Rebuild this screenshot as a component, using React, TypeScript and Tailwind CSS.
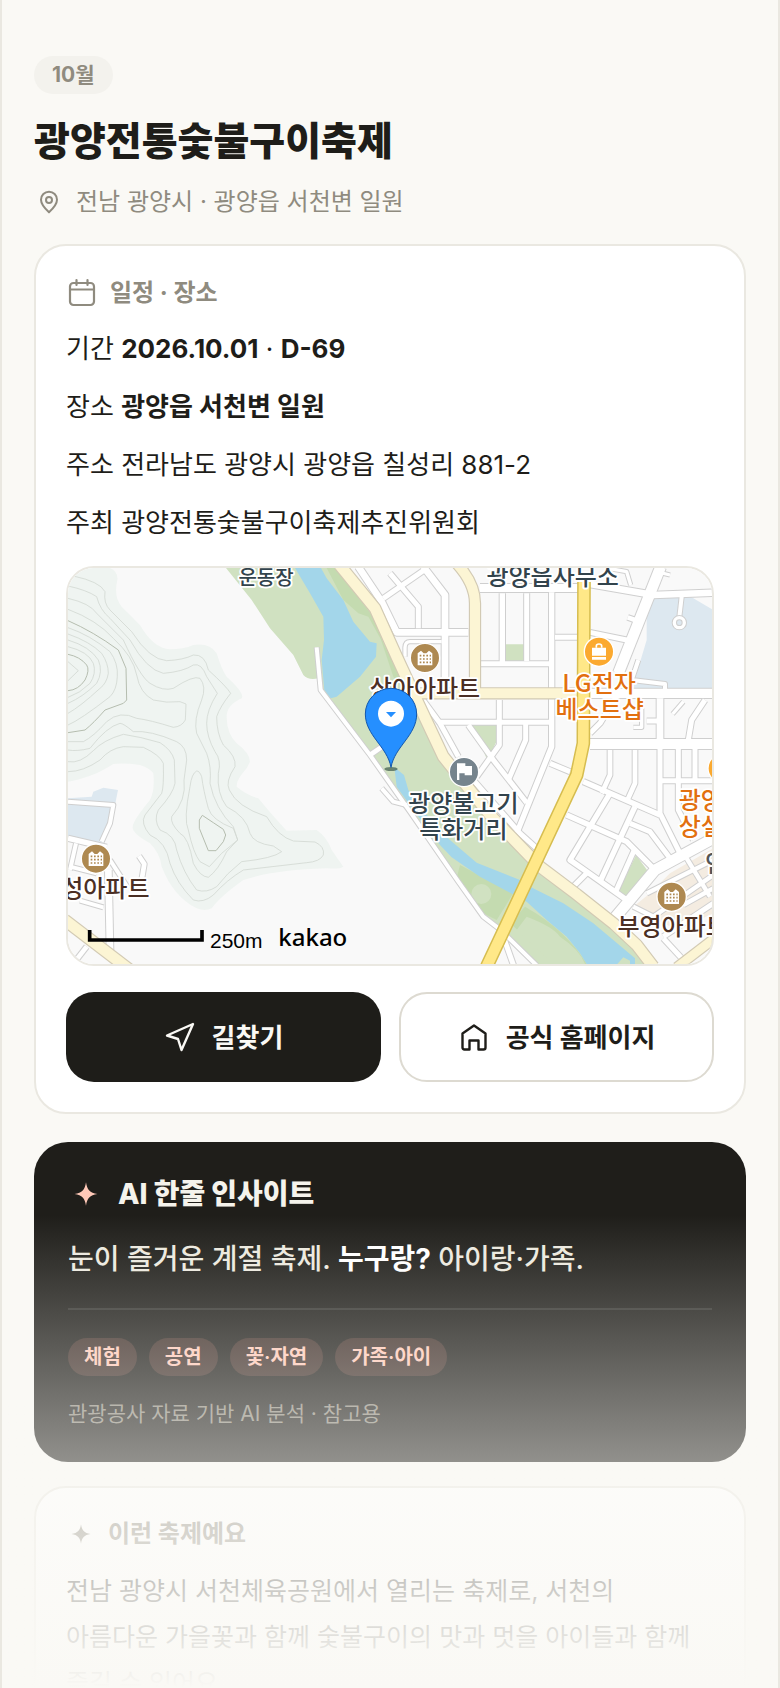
import React from 'react';

interface Road {
  d: string;
  w: number;
}

const ROADS: Road[] = [
  { d: 'M895 20L965 125L1010 217H1225', w: 20 },
  { d: 'M1090 20L1155 105V360', w: 20 },
  { d: 'M970 115L1100 25', w: 15 },
  { d: 'M990 40L1075 140V205', w: 15 },
  { d: 'M1035 290V262Q1036 245 1050 245H1145', w: 10 },
  { d: 'M1260 84H1555', w: 24 },
  { d: 'M1590 72L1780 105L1960 98', w: 20 },
  { d: 'M1640 24L1700 35L1712 75', w: 10 },
  { d: 'M1790 35L1830 45', w: 10 },
  { d: 'M1327 100V310', w: 16 },
  { d: 'M1400 100V303', w: 15 },
  { d: 'M1475 97V560L1370 820', w: 16 },
  { d: 'M1260 311H1468', w: 15 },
  { d: 'M1485 232H1560', w: 15 },
  { d: 'M1590 217L1700 240', w: 15 },
  { d: 'M1703 172L1725 180', w: 14 },
  { d: 'M1140 487H1475', w: 15 },
  { d: 'M1318 420V555L1250 650', w: 15 },
  { d: 'M1225 495L1300 600L1400 728', w: 15 },
  { d: 'M1397 490V540L1345 660', w: 15 },
  { d: 'M1085 415L1140 490L1195 590', w: 15 },
  { d: 'M1240 660L1380 820L1430 865', w: 15 },
  { d: 'M1802 20L1675 340', w: 32 },
  { d: 'M1735 300L1715 360L1815 372V392', w: 12 },
  { d: 'M1675 400L1620 490L1590 520', w: 15 },
  { d: 'M1590 400H1960', w: 28 },
  { d: 'M1590 552H1960', w: 30 },
  { d: 'M1865 110L1857 180', w: 12 },
  { d: 'M1800 415V540', w: 20 },
  { d: 'M1720 502H1745V425', w: 10 },
  { d: 'M1760 483H1795', w: 15 },
  { d: 'M1870 425L1838 462', w: 10 },
  { d: 'M1935 420L1895 480L1885 540', w: 15 },
  { d: 'M1650 570V645L1625 700', w: 14 },
  { d: 'M1725 570V670L1700 725', w: 14 },
  { d: 'M1800 565V760L1860 880', w: 15 },
  { d: 'M1855 565V750L1900 840', w: 15 },
  { d: 'M1905 565V660', w: 15 },
  { d: 'M1800 662H1960', w: 15 },
  { d: 'M1570 665L1800 765', w: 16 },
  { d: 'M1520 765L1700 845L1780 925', w: 16 },
  { d: 'M1470 610L1530 635', w: 15 },
  { d: 'M1650 700L1530 900L1580 935L1700 1020', w: 16 },
  { d: 'M1725 740L1620 965', w: 16 },
  { d: 'M1580 940L1535 985', w: 15 },
  { d: 'M1725 865L1665 1000', w: 15 },
  { d: 'M1710 790L1770 815L1830 895', w: 15 },
  { d: 'M1720 1040L1780 1070L1960 945', w: 13 },
  { d: 'M1760 1000L1960 900', w: 13 },
  { d: 'M1810 1130L1960 1030', w: 15 },
  { d: 'M1870 1035L1960 985', w: 13 },
  { d: 'M1880 895L1950 1010', w: 13 },
  { d: 'M1655 1085L1785 930L1960 835', w: 32 },
  { d: 'M1810 1135L1870 1200', w: 15 },
  { d: 'M1330 1130L1362 1220', w: 15 },
  { d: 'M24 725L160 735L150 790L125 845', w: 12 },
  { d: 'M24 835L140 862', w: 16 },
  { d: 'M48 850L30 930', w: 12 },
  { d: 'M30 920L110 940', w: 12 },
  { d: 'M145 930L150 1170', w: 20 },
  { d: 'M237 888L253 912L245 960', w: 14 },
  { d: 'M60 1022L130 1042', w: 12 },
  { d: 'M150 900L205 985', w: 12 },
  { d: 'M80 1160L45 1205', w: 14 },
  { d: 'M930 585L972 556', w: 14 },
  { d: 'M965 685L1000 725L1040 735', w: 12 },
  { d: 'M770 262L782 390L930 585L1050 755L1195 965L1270 1070L1320 1108L1430 1216', w: 12 },
];

const PALE_ROADS: Road[] = [
  { d: 'M1190 10Q1245 70 1245 130V400', w: 30 },
  { d: 'M1080 400H1560', w: 30 },
  { d: 'M838 14L945 145L1010 290L1070 420L1150 590L1290 765L1440 920L1550 1003L1660 1090L1730 1155L1780 1220', w: 32 },
  { d: 'M14 1080L210 1230', w: 32 },
  { d: 'M1850 1222L1970 1130', w: 26 },
];

const CONTOURS = [
  'M40 48Q120 65 135 95Q130 130 150 150L215 215Q270 300 320 302Q370 300 400 285Q435 282 445 330Q500 380 512 400Q480 440 470 470Q470 520 490 555Q530 590 525 620Q495 665 508 690Q530 740 620 770Q655 830 700 843L765 846Q795 860 790 885Q780 905 740 908L550 930Q500 960 460 1005Q430 1030 400 1020Q350 970 330 910Q318 845 270 825Q240 790 255 765L305 700Q312 680 310 610Q300 585 250 562L190 560Q150 565 120 600Q70 635 24 635',
  'M24 78Q80 90 110 110Q120 150 150 175L210 240Q260 330 310 340Q370 335 400 315Q425 308 440 350L472 400Q440 450 440 490Q440 530 465 575Q485 600 475 640Q470 700 500 740Q560 770 570 820Q580 850 640 858L665 875Q640 895 545 905Q500 940 470 980Q440 1000 410 990Q370 940 350 870Q345 825 300 810Q280 780 295 750Q340 700 345 670L343 600Q335 570 300 548Q240 530 190 523Q130 540 100 572Q60 612 24 605',
  'M24 115Q90 130 110 160L190 240Q240 350 270 370Q310 395 340 385Q400 345 420 355Q440 380 425 420Q400 480 410 520L440 580Q455 620 450 670Q465 745 520 800L533 840L500 875Q475 930 445 952Q420 950 400 910Q385 830 360 820Q330 790 335 770Q380 720 372 660L380 600Q380 560 350 545Q270 510 220 515Q190 490 180 490Q140 500 90 565Q50 575 24 570',
  'M410 633Q395 640 390 680Q370 780 385 810Q400 880 420 905L448 920L485 880L533 840L520 805Q455 780 445 745Q430 690 425 650Q418 632 410 633',
  'M24 148Q110 180 160 235Q220 290 230 345Q240 400 280 420Q320 430 360 425L378 432L376 480Q365 500 340 502Q270 480 230 475Q180 450 140 485Q100 530 70 545L24 545',
  'M24 203Q90 225 150 275Q175 310 172 350Q170 390 150 410Q60 480 24 495',
  'M24 222Q90 245 125 280Q145 310 145 340Q140 370 120 385Q60 440 24 460',
  'M24 240Q90 260 115 300Q130 335 110 370Q70 410 24 430',
  'M24 260Q85 275 100 310Q110 340 90 370Q60 400 24 412',
  'M24 305L55 332L24 362',
];

const DARK_CONTOURS = [
  'M24 182Q100 215 175 270L198 325L200 420L190 430L135 450Q100 490 75 510L24 518',
  'M24 283Q60 290 80 315Q90 330 75 360Q55 390 24 392',
  'M427 766L418 780V805L445 872H468L490 845L497 825L490 808L460 788Z',
];

const TAGS = ['체험', '공연', '꽃·자연', '가족·아이'];

const RoadLayer: React.FC<{ roads: Road[]; casing: string; fill: string; edge: number }> = ({ roads, casing, fill, edge }) => (
  <g fill="none" strokeLinejoin="round">
    {roads.map((r) => (
      <path key={r.d} d={r.d} stroke={casing} strokeWidth={r.w + edge} />
    ))}
    {roads.map((r) => (
      <path key={r.d} d={r.d} stroke={fill} strokeWidth={r.w} />
    ))}
  </g>
);

const ApartmentMarker: React.FC<{ x: number; y: number }> = ({ x, y }) => (
  <g transform={`translate(${x} ${y})`}>
    <circle r="44" fill="#ae8951" stroke="#fff" strokeWidth="4" />
    <path d="M-22 22V-14L-12 -22L-4 -14H4L12 -22L22 -14V22Z" fill="#fff" />
    <path d="M-16 -7H18M-16 3H18M-16 13H18" stroke="#ae8951" strokeWidth="5" strokeDasharray="5 5" />
  </g>
);

const FestivalMap: React.FC = () => (
  <svg
    viewBox="24 24 1932 1188"
    preserveAspectRatio="xMidYMid slice"
    className="block w-full h-[396px] font-['Noto_Sans_CJK_KR',sans-serif] font-medium"
    role="img"
    aria-label="지도"
  >
    <rect x="24" y="24" width="1932" height="1188" fill="#f9f9f9" />
    <path
      d="M24 24H150Q175 35 172 60Q160 110 185 140L240 195Q280 265 330 268Q370 268 400 255Q450 248 470 280Q485 330 500 350Q555 400 545 415Q500 435 500 470Q500 520 530 550Q570 580 570 605L560 625Q528 660 530 680Q560 705 595 715Q640 770 680 812L770 810Q800 830 815 870L850 920Q840 928 800 925Q640 930 550 960Q480 1010 455 1045Q435 1055 410 1045Q340 1010 305 920Q300 880 270 850Q215 820 218 800Q220 780 270 720Q285 690 280 640Q270 625 240 615Q190 608 160 612Q130 630 110 640Q60 660 24 665Z"
      fill="#eff4f1"
    />
    <g fill="none" stroke="#d3d9d3" strokeWidth="2.5">
      {CONTOURS.map((d) => (
        <path key={d} d={d} />
      ))}
    </g>
    <g fill="none" stroke="#b5bdaf" strokeWidth="3">
      {DARK_CONTOURS.map((d) => (
        <path key={d} d={d} />
      ))}
    </g>

    {/* parks */}
    <path
      d="M498 24H850L945 150L1070 420L1150 590L1360 830L1440 920L1775 1212H1430L1320 1108L1270 1070L1050 755L930 585L782 390L775 355Q745 362 730 345L700 285L630 205L575 120Z"
      fill="#d0e1c1"
    />
    <path d="M800 24H830L935 165L975 260L925 170L895 160L850 120Z" fill="#c4dbb0" />
    <path d="M960 230L1060 425L1000 350Z" fill="#c4dbb0" />
    <path d="M1200 915L1360 1000L1310 1080L1270 1060L1190 955ZM1350 1090L1395 1040Q1520 1110 1580 1212H1520L1440 1170Z" fill="#c4dbb0" />
    <circle cx="1264" cy="1002" r="30" fill="#d0e1c1" />
    <path d="M1400 1070Q1480 1100 1500 1130Q1560 1170 1575 1212H1480L1370 1110Z" fill="#d0e1c1" />
    <path d="M1335 253H1394V303H1335ZM1235 495H1312V540L1282 600ZM1728 885L1765 935L1700 1020L1670 1005Z" fill="#d0e1c1" />

    {/* water */}
    <path
      d="M705 24H783L800 55L850 120L880 185L930 245L950 250L948 290L900 350L830 410L812 415L793 390L785 300L792 240L790 170L750 100Z"
      fill="#a3d6ea"
    />
    <path
      d="M1003 622L1032 645L1045 690L1080 740L1130 800L1170 840L1250 908L1380 960L1410 980L1510 1030L1600 1090L1725 1195V1212H1580L1560 1180L1520 1130L1460 1080L1400 1025L1350 998L1260 950L1175 892L1140 855L1060 750L1010 680Z"
      fill="#a3d6ea"
    />
    <path d="M1672 1212L1690 1192L1710 1202V1212Z" fill="#d0e1c1" />
    <path d="M1760 115L1895 112L1960 150V390H1715L1760 240Z" fill="#dde8f0" />
    <path d="M24 715L95 710L100 695L130 683L174 690L165 735L130 848L24 830Z" fill="#dde8f0" />
    <path d="M1770 1000L1830 940L1960 865V1060L1850 1110L1720 1040Z" fill="#f4ece1" />

    <RoadLayer roads={ROADS} casing="#cfcfcf" fill="#fff" edge={6} />
    <circle cx="1858" cy="188" r="15" fill="#dde8f0" stroke="#cfcfcf" strokeWidth="16" />
    <circle cx="1858" cy="188" r="15" fill="none" stroke="#fff" strokeWidth="10" />
    <RoadLayer roads={PALE_ROADS} casing="#d2cab4" fill="#fcf5d4" edge={7} />
    <RoadLayer
      roads={[{ d: 'M1572 66L1570 550L1550 645L1280 1220', w: 32 }]}
      casing="#d6bd50"
      fill="#ffe888"
      edge={9}
    />

    <ApartmentMarker x={1095} y={294} />
    <ApartmentMarker x={108} y={896} />
    <ApartmentMarker x={1835} y={1010} />
    <g transform="translate(1617 275)">
      <circle r="44" fill="#fba92f" stroke="#fff" strokeWidth="4" />
      <path d="M-21 -12H21V12H-21ZM-21 16H21V24H-21Z" fill="#fff" />
      <path d="M-8 -12V-17Q-8 -23 0 -23T8 -17V-12" fill="none" stroke="#fff" strokeWidth="5" />
    </g>
    <circle cx="1988" cy="625" r="44" fill="#fba92f" stroke="#fff" strokeWidth="4" />
    <g transform="translate(1212 636)">
      <circle r="44" fill="#76848d" stroke="#fff" strokeWidth="4" />
      <path d="M-21 -26H4V-18H24V10H2V4H-14V24H-21Z" fill="#fff" />
    </g>

    <g stroke="#fff" strokeWidth="11" strokeLinejoin="round" paintOrder="stroke" fontSize="72" textAnchor="middle">
      <g fill="#32434c">
        <text x="618" y="76" fontSize="60">운동장</text>
        <text x="1478" y="76">광양읍사무소</text>
        <text x="1210" y="756">광양불고기</text>
        <text x="1210" y="834">특화거리</text>
      </g>
      <g fill="#4b2f24">
        <text x="1095" y="410">상아아파트</text>
        <text x="136" y="1011">성아파트</text>
        <text x="1838" y="1126">부영아파트</text>
      </g>
      <g fill="#e2700f">
        <text x="1617" y="396">LG전자</text>
        <text x="1619" y="475">베스트샵</text>
        <text x="1856" y="748" textAnchor="start">광양</text>
        <text x="1856" y="826" textAnchor="start">상설</text>
      </g>
      <text x="1935" y="936" textAnchor="start" fill="#555">인</text>
    </g>

    {/* current location pin */}
    <ellipse cx="993" cy="627" rx="20" ry="6" fill="#3d5a4a" opacity="0.7" />
    <path
      d="M993 622C982 560 916 526 916 462A77 77 0 0 1 1070 462C1070 526 1004 560 993 622Z"
      fill="#258fff"
      stroke="#1257ad"
      strokeWidth="3"
    />
    <circle cx="993" cy="461" r="39" fill="#fff" />
    <path d="M978 456H1008L993 472Z" fill="#258fff" />

    <path d="M89 1110V1140H426V1110" fill="none" stroke="#000" strokeWidth="11" />
    <text x="450" y="1164" fontSize="63" className="font-['Liberation_Sans',sans-serif] font-normal">250m</text>
    <text x="655" y="1157" fontSize="72" className="font-['Noto_Sans',sans-serif] font-medium">kakao</text>
  </svg>
);

const Sparkle: React.FC<{ className: string }> = ({ className }) => (
  <svg viewBox="0 0 24 24" fill="currentColor" className={className} aria-hidden="true">
    <path d="M12 4.200C12.700 9.200 14.600 11.200 19.600 12C14.600 12.800 12.700 14.800 12 19.800C11.300 14.800 9.400 12.800 4.400 12C9.400 11.200 11.300 9.200 12 4.200Z" />
  </svg>
);

const InfoRow: React.FC<{ label: string; children: React.ReactNode }> = ({ label, children }) => (
  <p>
    {label} {children}
  </p>
);

const App: React.FC = () => {
  return (
    <main className="relative h-screen overflow-hidden border-x-2 border-[#eae8e1] bg-[#faf9f5] px-8 pt-14 font-['Inter','Noto_Sans_CJK_KR',sans-serif] text-[#1e1d19]">
      <span className="inline-flex h-[38px] items-center rounded-full bg-[#f3f2ed] px-[18px] align-top text-[21px] font-bold text-[#8f8b7f]">
        10월
      </span>
      <h1 className="mt-[21px] text-[39px] leading-[52px] font-extrabold">광양전통숯불구이축제</h1>
      <p className="mt-[19px] flex items-center gap-3 text-[24px] leading-8 text-[#8f8b7f]">
        <svg viewBox="0 0 30 30" fill="none" stroke="currentColor" strokeWidth="2" className="size-[30px]" aria-hidden="true">
          <path d="M15 25.200C11.500 22 7 17.500 7 12.700a8 8 0 0 1 16 0C23 17.500 18.500 22 15 25.200Z" />
          <circle cx="15" cy="13" r="3" />
        </svg>
        전남 광양시 · 광양읍 서천변 일원
      </p>

      <section className="mt-[26px] rounded-[32px] border-2 border-[#eae8e1] bg-white p-[30px]">
        <h2 className="flex h-[34px] items-center gap-3 text-[24px] font-bold text-[#8f8b7f]">
          <svg viewBox="0 0 32 32" fill="none" stroke="currentColor" strokeWidth="2.200" strokeLinecap="round" className="size-8" aria-hidden="true">
            <rect x="4" y="6" width="24" height="22" rx="3.500" />
            <path d="M4 12.500H28M10.500 3V8M21.500 3V8" />
          </svg>
          일정 · 장소
        </h2>
        <div className="mt-[19px] flex flex-col gap-[18px] text-[26px] leading-10">
          <InfoRow label="기간">
            <strong>2026.10.01</strong> · <strong>D-69</strong>
          </InfoRow>
          <InfoRow label="장소">
            <strong>광양읍 서천변 일원</strong>
          </InfoRow>
          <InfoRow label="주소">전라남도 광양시 광양읍 칠성리 881-2</InfoRow>
          <InfoRow label="주최">광양전통숯불구이축제추진위원회</InfoRow>
        </div>
        <div className="mt-[23px] overflow-hidden rounded-[28px] border-2 border-[#eae8e1]">
          <FestivalMap />
        </div>
        <div className="mt-[26px] grid grid-cols-2 gap-[18px] text-[26px] font-bold">
          <a href="#directions" className="flex h-[90px] items-center justify-center gap-4 rounded-[28px] bg-[#1e1d19] text-[#faf9f5]">
            <svg viewBox="0 0 32 32" fill="none" stroke="currentColor" strokeWidth="2.400" strokeLinejoin="round" className="size-8" aria-hidden="true">
              <path d="M29 3L3 14.500L14 18L17.500 29Z" />
            </svg>
            길찾기
          </a>
          <a href="#homepage" className="flex h-[90px] items-center justify-center gap-4 rounded-[28px] border-2 border-[#dddad1] bg-white">
            <svg viewBox="0 0 32 32" fill="none" stroke="currentColor" strokeWidth="2.400" strokeLinejoin="round" className="size-8" aria-hidden="true">
              <path d="M4.500 12.500L16 4.500L27.500 12.500V26.500Q27.500 28.500 25.500 28.500H20.500V19.500H11.500V28.500H6.500Q4.500 28.500 4.500 26.500Z" />
            </svg>
            공식 홈페이지
          </a>
        </div>
      </section>

      <section className="mt-7 rounded-[34px] bg-[#1f1e1a] px-[34px] py-8">
        <h2 className="flex h-10 items-center gap-3.5 text-[28px] font-extrabold text-[#f5f3ec]">
          <Sparkle className="size-9 text-[#ffc9b8]" />
          AI 한줄 인사이트
        </h2>
        <p className="mt-[22px] text-[28px] leading-[46px] font-medium text-[#ece9df]">
          눈이 즐거운 계절 축제. <strong className="text-white">누구랑?</strong> 아이랑·가족.
        </p>
        <hr className="mt-[26px] border-t-2 border-white/10" />
        <ul className="mt-7 flex gap-3 text-[20px] font-semibold text-[#ffc9b8]">
          {TAGS.map((tag) => (
            <li key={tag} className="flex h-[38px] items-center rounded-full bg-[#ff9d85]/15 px-4">
              {tag}
            </li>
          ))}
        </ul>
        <p className="mt-[22px] text-[21px] leading-8 text-[#8f8b7f]">관광공사 자료 기반 AI 분석 · 참고용</p>
      </section>

      <section className="mt-6 rounded-[32px] border-2 border-[#eae8e1] bg-white p-[30px]">
        <h2 className="flex h-8 items-center gap-3 text-[24px] font-bold text-[#8f8b7f]">
          <Sparkle className="size-[30px]" />
          이런 축제예요
        </h2>
        <p className="mt-[18px] pr-2 text-[25px] leading-[46px] break-keep">
          전남 광양시 서천체육공원에서 열리는 축제로, 서천의 아름다운 가을꽃과 함께 숯불구이의 맛과 멋을 아이들과 함께 즐길 수 있어요.
        </p>
      </section>

      <div className="pointer-events-none absolute inset-x-0 bottom-0 h-[28vh] bg-linear-to-b from-[#faf9f5]/0 to-[#faf9f5]" />
    </main>
  );
};

export default App;
